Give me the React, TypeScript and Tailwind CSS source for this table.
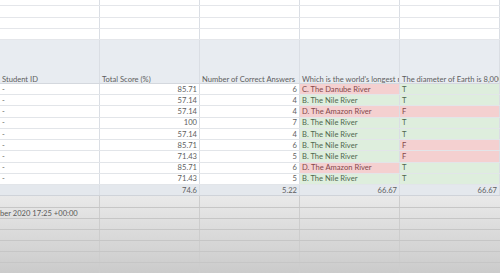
import React from 'react'

type Row = {
  score: string
  correct: string
  river: string
  riverOk: boolean
  earth: string
  earthOk: boolean
}

const rows: Row[] = [
  { score: '85.71', correct: '6', river: 'C. The Danube River', riverOk: false, earth: 'T', earthOk: true },
  { score: '57.14', correct: '4', river: 'B. The Nile River', riverOk: true, earth: 'T', earthOk: true },
  { score: '57.14', correct: '4', river: 'D. The Amazon River', riverOk: false, earth: 'F', earthOk: false },
  { score: '100', correct: '7', river: 'B. The Nile River', riverOk: true, earth: 'T', earthOk: true },
  { score: '57.14', correct: '4', river: 'B. The Nile River', riverOk: true, earth: 'T', earthOk: true },
  { score: '85.71', correct: '6', river: 'B. The Nile River', riverOk: true, earth: 'F', earthOk: false },
  { score: '71.43', correct: '5', river: 'B. The Nile River', riverOk: true, earth: 'F', earthOk: false },
  { score: '85.71', correct: '6', river: 'D. The Amazon River', riverOk: false, earth: 'T', earthOk: true },
  { score: '71.43', correct: '5', river: 'B. The Nile River', riverOk: true, earth: 'T', earthOk: true },
]

const cell = 'w-[100px] shrink-0 border-r border-[#dadee4] px-[2px] overflow-hidden whitespace-nowrap flex items-end'
const good = 'bg-[#deeedd] text-[#50684f]'
const bad = 'bg-[#f4d0d0] text-[#84484b]'

function BlankRow({ h }: { h: string }) {
  return (
    <div className={`flex ${h} border-b border-[#e4e6ea] bg-white`}>
      <div className={cell} />
      <div className={cell} />
      <div className={cell} />
      <div className={cell} />
      <div className={cell} />
    </div>
  )
}

function GreyRow({ text }: { text?: string }) {
  return (
    <div className="flex h-[11.1px] border-b border-[#c6c6c6]">
      <div className="w-[100px] shrink-0 border-r border-[#cdcdcd] flex items-end overflow-visible whitespace-nowrap leading-[9px]">
        {text && <span className="relative z-10 text-[#5a5a5a]">{text}</span>}
      </div>
      <div className="w-[100px] shrink-0 border-r border-[#cdcdcd]" />
      <div className="w-[100px] shrink-0 border-r border-[#cdcdcd]" />
      <div className="w-[100px] shrink-0 border-r border-[#cdcdcd]" />
      <div className="w-[100px] shrink-0" />
    </div>
  )
}

export default function App() {
  return (
    <div
      className="w-[500px] h-[273px] overflow-hidden bg-white text-[7.6px] text-[#5e5e5e]"
      style={{ fontFamily: 'Lato, "Liberation Sans", sans-serif' }}
    >
      {/* rows above the table */}
      <BlankRow h="h-[6px]" />
      <BlankRow h="h-[12px]" />
      <BlankRow h="h-[11px]" />
      <BlankRow h="h-[11px]" />

      {/* header */}
      <div className="flex h-[44px] border-b border-[#d4d8de] bg-[#e8ecf1] leading-[8px]">
        <div className={cell}>Student ID</div>
        <div className={cell}>Total Score (%)</div>
        <div className={cell}>Number of Correct Answers</div>
        <div className={cell}>Which is the world's longest river?</div>
        <div className={cell}>The diameter of Earth is 8,000 miles.</div>
      </div>

      {/* data rows */}
      {rows.map((r, i) => (
        <div key={i} className="flex h-[11.22px] border-b border-[#e2e5e9] leading-[9.5px]">
          <div className={`${cell} bg-white`}>-</div>
          <div className={`${cell} bg-white justify-end`}>{r.score}</div>
          <div className={`${cell} bg-white justify-end`}>{r.correct}</div>
          <div className={`${cell} ${r.riverOk ? good : bad}`}>{r.river}</div>
          <div className={`${cell} ${r.earthOk ? good : bad}`}>{r.earth}</div>
        </div>
      ))}

      {/* averages */}
      <div className="flex h-[11.5px] border-b border-[#cfd3d9] bg-[#e4e8ed] leading-[9.5px]">
        <div className={cell} />
        <div className={`${cell} justify-end`}>74.6</div>
        <div className={`${cell} justify-end`}>5.22</div>
        <div className={`${cell} justify-end`}>66.67</div>
        <div className={`${cell} justify-end`}>66.67</div>
      </div>

      {/* faded area below */}
      <div className="bg-gradient-to-b from-[#e9e9e9] to-[#cbcbcb] h-[77px]">
        <GreyRow />
        <GreyRow text="ber 2020 17:25 +00:00" />
        <GreyRow />
        <GreyRow />
        <GreyRow />
        <GreyRow />
        <GreyRow />
      </div>
    </div>
  )
}
